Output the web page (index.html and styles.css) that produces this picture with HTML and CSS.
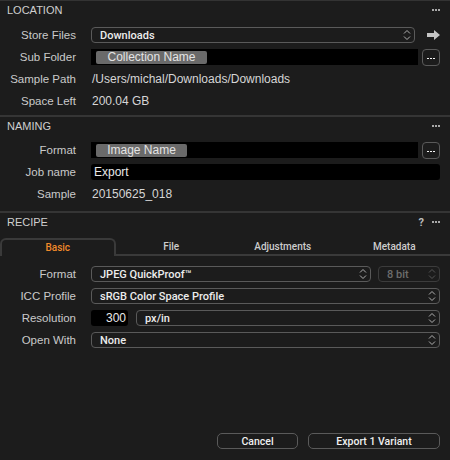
FILE: index.html
```html
<!doctype html>
<html lang="en">
  <head>
    <meta charset="UTF-8" />
    <title>Export Variants</title>
    <link rel="stylesheet" href="styles.css">
  </head>
  <body>
    <div class="panel panel-location">
      <div class="panel-head">
        <span class="panel-title">LOCATION</span>
        <span class="head-tools"><span class="more"><i></i><i></i><i></i></span></span>
      </div>
      <div class="panel-body">
        <div class="row">
          <label class="lbl">Store Files</label>
          <div class="ctrl">
            <div class="select"><span>Downloads</span><svg class="updown" width="8" height="12" viewBox="0 0 8 12"><path d="M1 4.5 L4 1.5 L7 4.5 M1 7.5 L4 10.5 L7 7.5" /></svg></div>
            <div class="go">
              <svg width="13" height="10" viewBox="0 0 13 10"><path d="M0 3 H7 V0 L13 5 L7 10 V7 H0 Z" fill="#c4c4c4" /></svg>
            </div>
          </div>
        </div>
        <div class="row">
          <label class="lbl">Sub Folder</label>
          <div class="ctrl">
            <div class="token-field"><span class="token token-wide">Collection Name</span></div>
            <button class="dots-btn"><i></i><i></i><i></i></button>
          </div>
        </div>
        <div class="row">
          <label class="lbl">Sample Path</label>
          <div class="ctrl value">/Users/michal/Downloads/Downloads</div>
        </div>
        <div class="row">
          <label class="lbl">Space Left</label>
          <div class="ctrl value">200.04 GB</div>
        </div>
      </div>
    </div>

    <div class="panel panel-naming">
      <div class="panel-head">
        <span class="panel-title">NAMING</span>
        <span class="head-tools"><span class="more"><i></i><i></i><i></i></span></span>
      </div>
      <div class="panel-body">
        <div class="row">
          <label class="lbl">Format</label>
          <div class="ctrl">
            <div class="token-field"><span class="token">Image Name</span></div>
            <button class="dots-btn"><i></i><i></i><i></i></button>
          </div>
        </div>
        <div class="row">
          <label class="lbl">Job name</label>
          <div class="ctrl">
            <div class="text-field">Export</div>
          </div>
        </div>
        <div class="row">
          <label class="lbl">Sample</label>
          <div class="ctrl value">20150625_018</div>
        </div>
      </div>
    </div>

    <div class="panel panel-recipe">
      <div class="panel-head">
        <span class="panel-title">RECIPE</span>
        <span class="head-tools"><span class="help">?</span><span class="more"><i></i><i></i><i></i></span></span>
      </div>
      <div class="tabs">
        <div class="tab active">Basic</div>
        <div class="tab">File</div>
        <div class="tab">Adjustments</div>
        <div class="tab">Metadata</div>
      </div>
      <div class="panel-body recipe-body">
        <div class="row">
          <label class="lbl">Format</label>
          <div class="ctrl">
            <div class="select"><span>JPEG QuickProof™</span><svg class="updown" width="8" height="12" viewBox="0 0 8 12"><path d="M1 4.5 L4 1.5 L7 4.5 M1 7.5 L4 10.5 L7 7.5" /></svg></div>
            <div class="select select-bits disabled"><span>8 bit</span><svg class="updown" width="8" height="12" viewBox="0 0 8 12"><path d="M1 4.5 L4 1.5 L7 4.5 M1 7.5 L4 10.5 L7 7.5" /></svg></div>
          </div>
        </div>
        <div class="row">
          <label class="lbl">ICC Profile</label>
          <div class="ctrl">
            <div class="select"><span>sRGB Color Space Profile</span><svg class="updown" width="8" height="12" viewBox="0 0 8 12"><path d="M1 4.5 L4 1.5 L7 4.5 M1 7.5 L4 10.5 L7 7.5" /></svg></div>
          </div>
        </div>
        <div class="row">
          <label class="lbl">Resolution</label>
          <div class="ctrl">
            <div class="num-field">300</div>
            <div class="select"><span>px/in</span><svg class="updown" width="8" height="12" viewBox="0 0 8 12"><path d="M1 4.5 L4 1.5 L7 4.5 M1 7.5 L4 10.5 L7 7.5" /></svg></div>
          </div>
        </div>
        <div class="row">
          <label class="lbl">Open With</label>
          <div class="ctrl">
            <div class="select"><span>None</span><svg class="updown" width="8" height="12" viewBox="0 0 8 12"><path d="M1 4.5 L4 1.5 L7 4.5 M1 7.5 L4 10.5 L7 7.5" /></svg></div>
          </div>
        </div>
      </div>
    </div>

    <div class="footer">
      <button class="btn btn-cancel">Cancel</button>
      <button class="btn btn-export">Export 1 Variant</button>
    </div>
  </body>
</html>
```

FILE: styles.css
```css
* {
  margin: 0;
  padding: 0;
  box-sizing: border-box;
}

body {
  font-family: "Liberation Sans", Arial, sans-serif;
  font-size: 11.5px;
  background: #1c1c1c;
  color: #d2d2d2;
  width: 450px;
  height: 460px;
  overflow: hidden;
  display: flex;
  flex-direction: column;
  border-top: 1px solid #333333;
}

/* panels */

.panel + .panel {
  border-top: 2px solid #353535;
}

.panel-head {
  height: 18px;
  display: flex;
  align-items: center;
  justify-content: space-between;
  padding: 0 10px 0 7px;
}

.panel-title {
  font-size: 11px;
  color: #cfcfcf;
}

.head-tools {
  display: flex;
  align-items: center;
  gap: 8px;
}

.help {
  font-family: Roboto, sans-serif;
  font-weight: 700;
  font-size: 11px;
  color: #bdbdbd;
}

.more {
  display: flex;
  gap: 1px;
}

.more i {
  width: 2px;
  height: 2px;
  background: #a8a8a8;
}

.panel-body {
  padding: 5px 0 3px;
}

.panel-naming .panel-body {
  padding: 4px 0 6px;
}

.recipe-body {
  padding: 7px 0 0;
}

.row {
  height: 22px;
  display: flex;
  align-items: center;
}

.lbl {
  width: 76px;
  margin-right: 15px;
  text-align: right;
  color: #cacaca;
  flex-shrink: 0;
}

.ctrl {
  flex: 1;
  display: flex;
  align-items: center;
  margin-right: 10px;
  min-width: 0;
}

.value {
  font-size: 12px;
  color: #d6d6d6;
  padding-left: 1px;
}

/* controls */

.select {
  flex: 1;
  height: 16px;
  border: 1px solid #5a5a5a;
  border-radius: 4px;
  background: #1c1c1c;
  display: flex;
  align-items: center;
  justify-content: space-between;
  padding: 0 3px 0 8px;
  font-family: Roboto, sans-serif;
  font-weight: 500;
  font-size: 11px;
  color: #ececec;
}

.updown {
  fill: none;
  stroke: #b0b0b0;
  stroke-width: 1;
}

.select-bits {
  flex: 0 0 62px;
  margin-left: 7px;
}

.disabled {
  border-color: #3c3c3c;
  color: #6c6c6c;
}

.disabled .updown {
  stroke: #555555;
}

.go {
  width: 25px;
  display: flex;
  justify-content: flex-end;
  align-items: center;
}

.token-field {
  flex: 1;
  height: 16px;
  background: #000000;
  display: flex;
  align-items: center;
  padding-left: 5px;
  margin-right: 4px;
}

.token {
  height: 13px;
  width: 91px;
  background: #6a6a6a;
  border-radius: 2px;
  color: #e4e4e4;
  font-size: 12px;
  line-height: 13px;
  text-align: center;
}

.token-wide {
  width: 111px;
}

.dots-btn {
  width: 18px;
  height: 17px;
  border: 1px solid #5a5a5a;
  border-radius: 4px;
  background: #1c1c1c;
  display: flex;
  justify-content: center;
  align-items: flex-end;
  gap: 1px;
  padding-bottom: 6px;
}

.dots-btn i {
  width: 2px;
  height: 1px;
  background: #f4f4f4;
}

.text-field {
  flex: 1;
  height: 16px;
  background: #000000;
  border-radius: 3px;
  padding-left: 3px;
  line-height: 16px;
  font-size: 12px;
  color: #e8e8e8;
}

.num-field {
  width: 37px;
  height: 16px;
  background: #000000;
  border-radius: 3px;
  margin-right: 8px;
  text-align: right;
  padding-right: 2px;
  line-height: 16px;
  font-size: 12px;
  color: #e8e8e8;
}

/* tabs */

.tabs {
  margin-top: 7px;
  height: 18px;
  display: flex;
}

.tab {
  flex: 1;
  border-bottom: 2px solid #3a3a3a;
  text-align: center;
  font-family: Roboto, sans-serif;
  font-weight: 500;
  font-size: 10px;
  line-height: 17px;
  color: #cccccc;
}

.tab.active {
  border: 2px solid #3a3a3a;
  border-bottom: none;
  border-radius: 6px 6px 0 0;
  color: #f0892a;
  line-height: 15px;
}

/* footer */

.footer {
  margin-top: auto;
  display: flex;
  justify-content: flex-end;
  gap: 10px;
  padding: 0 10px 11px 0;
}

.btn {
  height: 16px;
  border: 1px solid #5a5a5a;
  border-radius: 5px;
  background: #1c1c1c;
  color: #f0f0f0;
  font-family: Roboto, sans-serif;
  font-weight: 500;
  font-size: 10.5px;
}

.btn-cancel {
  width: 81px;
}

.btn-export {
  width: 132px;
}
```
